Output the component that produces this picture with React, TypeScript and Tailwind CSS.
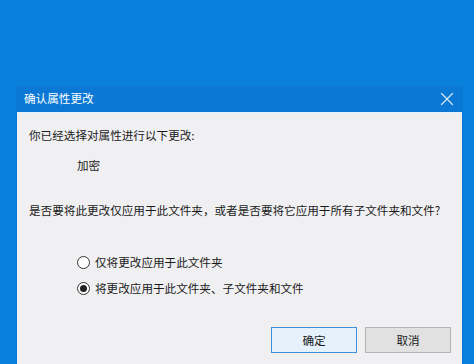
import { X } from "lucide-react";

const FONT = "font-['Segoe_UI','Noto_Sans_CJK_SC',sans-serif]";

function Radio({ checked, label }: { checked?: boolean; label: string }) {
  return (
    <div className="flex items-center h-[16px]">
      <span className="flex h-[13px] w-[13px] items-center justify-center rounded-full border border-[#333] bg-white">
        {checked && <span className="h-[7px] w-[7px] rounded-full bg-[#222]" />}
      </span>
      <span className="ml-[5px]">{label}</span>
    </div>
  );
}

export default function App() {
  return (
    <div
      className={`w-[474px] h-[364px] overflow-hidden bg-[#0880dc] pt-[86px] pl-[16px] ${FONT}`}
    >
      <div className="w-[447px] h-[290px] bg-[#0b78d5] flex flex-col">
        {/* title bar */}
        <div className="h-[26px] flex items-center justify-between pl-[8px] pr-[5px] text-white text-[11.6px]">
          <span>确认属性更改</span>
          <X className="h-[22px] w-[22px] text-[#d6e8f8]" strokeWidth={1.3} />
        </div>

        {/* body */}
        <div className="mx-px flex-1 bg-[#f0f0f2] border-t border-l border-[#e4f0fb] text-[11.6px] leading-[16px] text-[#1a1a1a] px-[11px] pt-[14px]">
          <div>你已经选择对属性进行以下更改:</div>
          <div className="mt-[14px] pl-[48px]">加密</div>
          <div className="mt-[29px]">是否要将此更改仅应用于此文件夹，或者是否要将它应用于所有子文件夹和文件?</div>

          <div className="mt-[36px] pl-[48px] flex flex-col gap-[10px]">
            <Radio label="仅将更改应用于此文件夹" />
            <Radio checked label="将更改应用于此文件夹、子文件夹和文件" />
          </div>

          <div className="mt-[31px] flex justify-end gap-[8px]">
            <button className="h-[26px] w-[86px] border border-[#3c8ed8] bg-[#e5f1fb] text-[#1a1a1a]">
              确定
            </button>
            <button className="h-[26px] w-[86px] border border-[#b4b4b4] bg-[#e1e1e1] text-[#1a1a1a]">
              取消
            </button>
          </div>
        </div>
      </div>
    </div>
  );
}
